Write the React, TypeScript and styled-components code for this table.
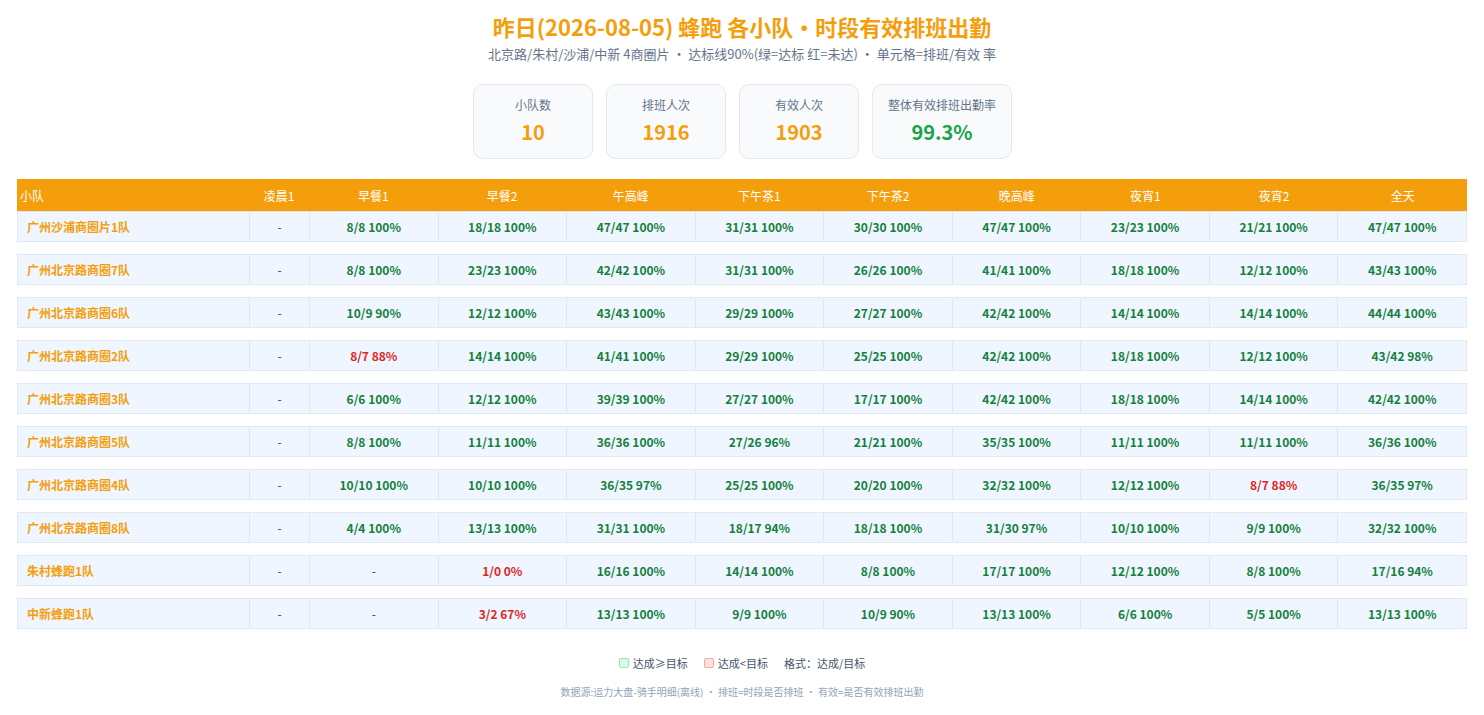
import React from 'react';
import styled, { createGlobalStyle } from 'styled-components';

// --- Settings ---------------------------------------------------------------
const ORANGE = '#f59e0b';
const GREEN = '#15803d';
const RED = '#dc2626';
const BORDER = '#e2e8f0';
const COLUMNS = '232px 60px repeat(9, 1fr)';

const GlobalStyle = createGlobalStyle`
  html, body {
    margin: 0;
    padding: 0;
    background: #ffffff;
    font-family: "Noto Sans CJK SC", "Noto Sans", sans-serif;
    color: #334155;
  }
`;

const Page = styled.div`
  padding: 10px 17px 16px;
  display: flex;
  flex-direction: column;
  align-items: center;
`;

const Title = styled.h1`
  margin: 0;
  font-size: 22px;
  line-height: 32px;
  font-weight: 700;
  color: ${ORANGE};
`;

const Subtitle = styled.div`
  margin-top: 2px;
  font-size: 13px;
  line-height: 20px;
  color: #64748b;
`;

// --- Stat cards --------------------------------------------------------------
const Cards = styled.div`
  display: flex;
  gap: 13px;
  margin-top: 20px;
  padding-left: 1px;
`;

const Card = styled.div<{ $wide?: boolean }>`
  width: ${(p) => (p.$wide ? 140 : 120)}px;
  height: 75px;
  box-sizing: border-box;
  border: 1px solid ${BORDER};
  border-radius: 10px;
  background: #f8fafc;
  display: flex;
  flex-direction: column;
  align-items: center;
  padding-top: 11px;
`;

const CardLabel = styled.div`
  font-size: 12px;
  line-height: 18px;
  color: #64748b;
`;

const CardValue = styled.div<{ $color: string }>`
  margin-top: 5px;
  font-size: 20px;
  line-height: 26px;
  font-weight: 700;
  color: ${(p) => p.$color};
`;

// --- Table ------------------------------------------------------------------
const Table = styled.div`
  align-self: stretch;
  margin-top: 20px;
  display: flex;
  flex-direction: column;
`;

const HeadRow = styled.div`
  display: grid;
  grid-template-columns: ${COLUMNS};
  height: 32px;
  background: ${ORANGE};
  color: #ffffff;
  font-size: 12px;
`;

const HeadCell = styled.div<{ $left?: boolean }>`
  display: flex;
  align-items: center;
  justify-content: ${(p) => (p.$left ? 'flex-start' : 'center')};
  padding-left: ${(p) => (p.$left ? '3px' : '0')};
`;

const Body = styled.div`
  display: flex;
  flex-direction: column;
  gap: 12px;
`;

const Row = styled.div`
  display: grid;
  grid-template-columns: ${COLUMNS};
  height: 31px;
  box-sizing: border-box;
  border: 1px solid ${BORDER};
  border-right: none;
  background: #eff6ff;
`;

const TeamCell = styled.div`
  display: flex;
  align-items: center;
  padding-left: 9px;
  border-right: 1px solid ${BORDER};
  font-size: 12px;
  font-weight: 700;
  color: ${ORANGE};
`;

const ValueCell = styled.div<{ $state: 'ok' | 'bad' | 'none' }>`
  display: flex;
  align-items: center;
  justify-content: center;
  border-right: 1px solid ${BORDER};
  font-size: 12px;
  font-weight: ${(p) => (p.$state === 'none' ? 400 : 700)};
  color: ${(p) => (p.$state === 'ok' ? GREEN : p.$state === 'bad' ? RED : '#334155')};
`;

// --- Legend & footer ---------------------------------------------------------
const Legend = styled.div`
  margin-top: 26px;
  display: flex;
  align-items: center;
  gap: 16px;
  font-size: 11px;
  color: #475569;
`;

const LegendItem = styled.span`
  display: inline-flex;
  align-items: center;
  gap: 4px;
`;

const Swatch = styled.span<{ $fill: string; $line: string }>`
  width: 8px;
  height: 8px;
  border-radius: 2px;
  background: ${(p) => p.$fill};
  border: 1px solid ${(p) => p.$line};
`;

const Footer = styled.div`
  margin-top: 13px;
  font-size: 10px;
  color: #94a3b8;
`;

// --- Data -------------------------------------------------------------------
const HEADERS = ['凌晨1', '早餐1', '早餐2', '午高峰', '下午茶1', '下午茶2', '晚高峰', '夜宵1', '夜宵2', '全天'];

const ROWS: [string, string[]][] = [
  ['广州沙浦商圈片1队', ['-', '8/8', '18/18', '47/47', '31/31', '30/30', '47/47', '23/23', '21/21', '47/47']],
  ['广州北京路商圈7队', ['-', '8/8', '23/23', '42/42', '31/31', '26/26', '41/41', '18/18', '12/12', '43/43']],
  ['广州北京路商圈6队', ['-', '10/9', '12/12', '43/43', '29/29', '27/27', '42/42', '14/14', '14/14', '44/44']],
  ['广州北京路商圈2队', ['-', '8/7', '14/14', '41/41', '29/29', '25/25', '42/42', '18/18', '12/12', '43/42']],
  ['广州北京路商圈3队', ['-', '6/6', '12/12', '39/39', '27/27', '17/17', '42/42', '18/18', '14/14', '42/42']],
  ['广州北京路商圈5队', ['-', '8/8', '11/11', '36/36', '27/26', '21/21', '35/35', '11/11', '11/11', '36/36']],
  ['广州北京路商圈4队', ['-', '10/10', '10/10', '36/35', '25/25', '20/20', '32/32', '12/12', '8/7', '36/35']],
  ['广州北京路商圈8队', ['-', '4/4', '13/13', '31/31', '18/17', '18/18', '31/30', '10/10', '9/9', '32/32']],
  ['朱村蜂跑1队', ['-', '-', '1/0', '16/16', '14/14', '8/8', '17/17', '12/12', '8/8', '17/16']],
  ['中新蜂跑1队', ['-', '-', '3/2', '13/13', '9/9', '10/9', '13/13', '6/6', '5/5', '13/13']],
];

function formatCell(raw: string): { text: string; state: 'ok' | 'bad' | 'none' } {
  if (raw === '-') return { text: '-', state: 'none' };
  const [plan, valid] = raw.split('/').map(Number);
  const rate = plan ? Math.round((valid / plan) * 100) : 0;
  return { text: `${raw} ${rate}%`, state: valid / plan >= 0.9 ? 'ok' : 'bad' };
}

export default function App() {
  return (
    <Page>
      <GlobalStyle />
      <Title>昨日(2026-08-05) 蜂跑 各小队・时段有效排班出勤</Title>
      <Subtitle>北京路/朱村/沙浦/中新 4商圈片 · 达标线90%(绿=达标 红=未达) · 单元格=排班/有效 率</Subtitle>

      <Cards>
        <Card>
          <CardLabel>小队数</CardLabel>
          <CardValue $color={ORANGE}>10</CardValue>
        </Card>
        <Card>
          <CardLabel>排班人次</CardLabel>
          <CardValue $color={ORANGE}>1916</CardValue>
        </Card>
        <Card>
          <CardLabel>有效人次</CardLabel>
          <CardValue $color={ORANGE}>1903</CardValue>
        </Card>
        <Card $wide>
          <CardLabel>整体有效排班出勤率</CardLabel>
          <CardValue $color="#16a34a">99.3%</CardValue>
        </Card>
      </Cards>

      <Table>
        <HeadRow>
          <HeadCell $left>小队</HeadCell>
          {HEADERS.map((h) => (
            <HeadCell key={h}>{h}</HeadCell>
          ))}
        </HeadRow>
        <Body>
          {ROWS.map(([team, cells]) => (
            <Row key={team}>
              <TeamCell>{team}</TeamCell>
              {cells.map((raw, i) => {
                const { text, state } = formatCell(raw);
                return (
                  <ValueCell key={i} $state={state}>
                    {text}
                  </ValueCell>
                );
              })}
            </Row>
          ))}
        </Body>
      </Table>

      <Legend>
        <LegendItem>
          <Swatch $fill="#dcfce7" $line="#86efac" />
          达成≥目标
        </LegendItem>
        <LegendItem>
          <Swatch $fill="#fee2e2" $line="#fca5a5" />
          达成&lt;目标
        </LegendItem>
        <LegendItem>格式：达成/目标</LegendItem>
      </Legend>
      <Footer>数据源:运力大盘-骑手明细(离线) · 排班=时段是否排班 · 有效=是否有效排班出勤</Footer>
    </Page>
  );
}
